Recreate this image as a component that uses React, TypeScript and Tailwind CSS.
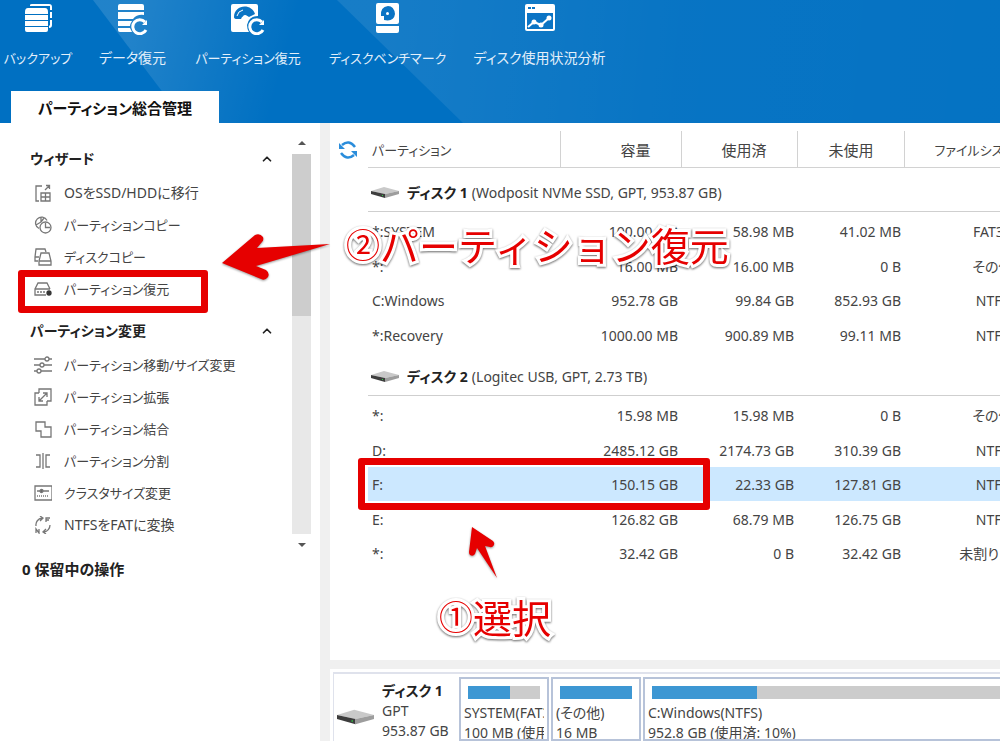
import { ChevronUp } from 'lucide-react';

const toolbar = [
  { label: 'バックアップ', dense: true, icon: <BackupIcon /> },
  { label: 'データ復元', icon: <DataRecoveryIcon /> },
  { label: 'パーティション復元', dense: true, icon: <PartitionRecoveryIcon /> },
  { label: 'ディスクベンチマーク', dense: true, icon: <BenchmarkIcon /> },
  { label: 'ディスク使用状況分析', icon: <UsageIcon /> },
];

// dense: long katakana labels use the smaller text size
const sections = [
  {
    title: 'ウィザード',
    items: [
      {
        label: 'OSをSSD/HDDに移行',
        icon: (
          <>
            <path d="M8 2H2v15h3" />
            <path d="M7 9h9v8H7zM7 13h9M11.500 9v8M11 6l4-4M12 1.500h3.500V5" />
          </>
        ),
      },
      {
        label: 'パーティションコピー',
        dense: true,
        icon: (
          <>
            <path d="M5 12.500A6 6 0 1 1 13 4.500M7 1v5L2 9M7 6l3-4" />
            <circle cx="11.500" cy="11.500" r="5.500" />
            <path d="M11.500 7v4.500H16" />
          </>
        ),
      },
      {
        label: 'ディスクコピー',
        dense: true,
        icon: (
          <>
            <path d="M4 13H1V9l1-8h9l1 3M1 9h4" />
            <path d="M7 5h8l2 8v4H5v-4zM5 13h12" />
          </>
        ),
      },
      {
        label: 'パーティション復元',
        dense: true,
        icon: (
          <>
            <path d="M12 15H1V9l3-6h9l3 6M1 9h15" />
            <path d="M3 12h8" strokeDasharray="2 1" />
            <circle cx="15" cy="13" r="2" fill="#333" stroke="#333" />
          </>
        ),
      },
    ],
  },
  {
    title: 'パーティション変更',
    items: [
      {
        label: 'パーティション移動/サイズ変更',
        dense: true,
        icon: (
          <>
            <path d="M0 3h11M15 3h3M0 9h6M10 9h8M0 15h3M7 15h11" />
            <circle cx="13" cy="3" r="2" />
            <circle cx="8" cy="9" r="2" />
            <circle cx="5" cy="15" r="2" />
          </>
        ),
      },
      {
        label: 'パーティション拡張',
        dense: true,
        icon: (
          <>
            <path d="M5 5V1h12v12h-4M5 5H1v12h12v-4" />
            <path d="M5 13l8-8M9 5h4v4M5 9v4h4" />
          </>
        ),
      },
      { label: 'パーティション結合', dense: true, icon: <path d="M2 2h9v5h6v10H7v-6H2z" /> },
      {
        label: 'パーティション分割',
        dense: true,
        icon: <path d="M2 3h4v12H2M9 1v16M16 3h-4v12h4" />,
      },
      {
        label: 'クラスタサイズ変更',
        dense: true,
        icon: (
          <>
            <path d="M1 2h17v14H1zM3 7h3M9 7h6" />
            <circle cx="7.500" cy="7" r="1.500" fill="#666" />
            <path d="M3 12h12" strokeDasharray="1 1" />
          </>
        ),
      },
      {
        label: 'NTFSをFATに変換',
        icon: (
          <>
            <path d="M2 10a7 7 0 0 1 6-8M6 0l3 2-3 3M16 9a7 7 0 0 1-6 7M12 13l-3 3 3 2" />
            <path d="M12 6V2h4M12 4h3M2 17v-4l3 4v-4" />
          </>
        ),
      },
    ],
  },
];

const disks = [
  {
    name: 'ディスク 1',
    info: '(Wodposit NVMe SSD, GPT, 953.87 GB)',
    rows: [
      ['*:SYSTEM', '100.00 MB', '58.98 MB', '41.02 MB', 'FAT32'],
      ['*:', '16.00 MB', '16.00 MB', '0 B', 'その他'],
      ['C:Windows', '952.78 GB', '99.84 GB', '852.93 GB', 'NTFS'],
      ['*:Recovery', '1000.00 MB', '900.89 MB', '99.11 MB', 'NTFS'],
    ],
  },
  {
    name: 'ディスク 2',
    info: '(Logitec USB, GPT, 2.73 TB)',
    rows: [
      ['*:', '15.98 MB', '15.98 MB', '0 B', 'その他'],
      ['D:', '2485.12 GB', '2174.73 GB', '310.39 GB', 'NTFS'],
      ['F:', '150.15 GB', '22.33 GB', '127.81 GB', 'NTFS'],
      ['E:', '126.82 GB', '68.79 MB', '126.75 GB', 'NTFS'],
      ['*:', '32.42 GB', '0 B', '32.42 GB', '未割り当て'],
    ],
  },
];

function BackupIcon() {
  return (
    <svg width="32" height="32" viewBox="0 0 32 32" fill="#fff">
      <path d="M8 2q0-1 2-1h17q3 0 3 3v3h-2V3H8zM28 9h2v6h-2zM28 17h2v5h-2zM28 22h2q0 3-3 3v-2z" />
      <path d="M6 5h17q3 0 3 4v2H3V9q0-4 3-4zM3 12h23v5H3zM3 18h23v5H3zM3 24h23v3q0 2-2 2H5q-2 0-2-2z" />
    </svg>
  );
}

function DataRecoveryIcon() {
  return (
    <svg width="32" height="32" viewBox="0 0 32 32" fill="#fff">
      <path d="M3 1h22q2 0 2 2v4H1V3q0-2 2-2zM1 9h26v3q-7-1-11 4H1zM1 18h14q-2 3-2 5H1zM1 25h12l2 4H3q-2 0-2-2z" />
      <path d="M28 19a7 7 0 1 0 1 8" fill="none" stroke="#fff" strokeWidth="3" />
      <path d="M30 17v5h-5z" />
    </svg>
  );
}

function PartitionRecoveryIcon() {
  return (
    <svg width="36" height="32" viewBox="0 0 36 32" fill="#fff">
      <path d="M3 1h23q2 0 2 2v10q-9 0-11 9 0 4 2 7H3q-2 0-2-2V3q0-2 2-2z" />
      <path d="M4 14C4 1 22 0 25 11l-6 3q-3-3-7 0l-1 2H7q-3 0-3-2z" fill="#0b74c4" />
      <path d="M7 13Q8 8 13 7" stroke="#fff" fill="none" />
      <circle cx="15" cy="14" r="2" />
      <path d="M32 19a7 7 0 1 0 1 8" fill="none" stroke="#fff" strokeWidth="3" />
      <path d="M34 17v5h-5z" />
    </svg>
  );
}

function BenchmarkIcon() {
  return (
    <svg width="32" height="32" viewBox="0 0 32 32" fill="#fff">
      <path d="M6 0h19q2 0 2 2v17q0 2-2 2H6q-2 0-2-2V2q0-2 2-2zM4 23h23v5q0 2-2 2H6q-2 0-2-2z" />
      <path d="M9 13h3v4q10 2 11-6-1-8-7-8-8 1-7 10z" fill="#0b74c4" />
      <circle cx="15.500" cy="10.500" r="1.500" />
    </svg>
  );
}

function UsageIcon() {
  return (
    <svg width="32" height="32" viewBox="0 0 32 32">
      <rect x="1" y="1" width="30" height="27" rx="2" fill="#fff" />
      <path d="M3 10h26v16H3zM4 4h3v2H4zM8 4h3v2H8z" fill="#0b74c4" />
      <path d="M4 24l6-5 7 3 8-7" fill="none" stroke="#fff" strokeWidth="2" />
      <circle cx="10" cy="19" r="2.500" fill="#fff" />
      <circle cx="17" cy="22" r="2.500" fill="#fff" />
      <circle cx="25" cy="15" r="2.500" fill="#fff" />
    </svg>
  );
}

function DriveIcon({ className }: { className: string }) {
  return (
    <svg className={className} viewBox="0 0 28 11">
      <path d="M0 4L13 0l15 4-14 3z" fill="#c9c9c9" />
      <path d="M0 4l14 3v4L0 7z" fill="#3d3d3d" />
      <path d="M14 7l14-3v3l-14 4z" fill="#9d9d9d" />
      <path d="M11 8h1v1h-1z" fill="#2fd045" />
    </svg>
  );
}

function RefreshIcon() {
  return (
    <svg width="20" height="20" viewBox="0 0 20 20" fill="none" stroke="#2b8ddb" strokeWidth="2">
      <path d="M4 5Q11-1 17 7M16 15q-7 6-13-2" strokeWidth="2.500" />
      <path d="M1 3v6h6zM19 17v-6h-6z" fill="#2b8ddb" stroke="none" />
    </svg>
  );
}

// faint diagonal light bands behind the toolbar
function HeaderBands() {
  return (
    <svg className="absolute inset-0 h-full w-full" viewBox="0 0 1000 123" preserveAspectRatio="none">
      <defs>
        <linearGradient id="band1" gradientUnits="userSpaceOnUse" x1="130" y1="40" x2="280" y2="80">
          <stop offset="0" stopColor="#fff" stopOpacity="0.130" />
          <stop offset="1" stopColor="#fff" stopOpacity="0" />
        </linearGradient>
        <linearGradient id="band2" gradientUnits="userSpaceOnUse" x1="370" y1="0" x2="1000" y2="60">
          <stop offset="0" stopColor="#fff" stopOpacity="0.090" />
          <stop offset="0.500" stopColor="#fff" stopOpacity="0.030" />
          <stop offset="1" stopColor="#fff" stopOpacity="0.020" />
        </linearGradient>
      </defs>
      <path d="M93 0h244l126 123H186z" fill="url(#band1)" />
      <path d="M337 0h663v123H463z" fill="url(#band2)" />
    </svg>
  );
}

function Partition({
  title,
  detail,
  used,
  className,
}: {
  title: string;
  detail: string;
  used: number;
  className: string;
}) {
  return (
    <div className={`overflow-hidden whitespace-nowrap border-2 border-[#b7c3d9] pt-[7px] ${className}`}>
      <div className="mx-[7px] h-[13px] bg-[#cccccc]">
        <div className="h-full bg-[#3d97d3]" style={{ width: `${used}%` }} />
      </div>
      <div className="mx-[3px] mt-1 overflow-hidden leading-5">
        <p>{title}</p>
        <p>{detail}</p>
      </div>
    </div>
  );
}

function Note({ step, text, className }: { step: string; text: string; className: string }) {
  return (
    <p
      className={`absolute flex items-center whitespace-nowrap text-[39px] leading-[48px] text-[#e60000] [paint-order:stroke] [-webkit-text-stroke:6px_white] drop-shadow-[0_1px_1px_rgba(0,0,0,0.6)] [font-feature-settings:normal] font-['Noto_Sans_CJK_JP',sans-serif] ${className}`}
    >
      <span className="text-[34px]">{step}</span>
      <span>{text}</span>
    </p>
  );
}

export default function App() {
  return (
    <div className="relative flex h-screen flex-col overflow-hidden bg-white text-sm text-[#444] font-['Noto_Sans','Noto_Sans_CJK_JP',sans-serif] [font-feature-settings:'palt']">
      <header className="relative shrink-0 bg-[#0070c2]">
        <HeaderBands />
        <nav className="relative grid grid-cols-[66px_67px_108px_115px_133px] gap-7 pl-[5px] pt-[3px] text-[#e3effa]">
          {toolbar.map((tool) => (
            <button key={tool.label} className="flex flex-col items-center gap-[11px] whitespace-nowrap">
              {tool.icon}
              <span className={`leading-6 ${tool.dense ? 'text-[13px]' : ''}`}>{tool.label}</span>
            </button>
          ))}
        </nav>
        <div className="relative mt-[21px] flex pl-[11px]">
          <button className="h-8 w-[208px] whitespace-nowrap bg-white pt-1 text-[15px] font-bold text-[#111]">
            パーティション総合管理
          </button>
        </div>
      </header>

      <div className="flex min-h-0 flex-1">
        <aside className="w-80 shrink-0">
          <div className="flex pt-3">
            <div className="min-w-0 flex-1 pb-1 pt-1.5">
              {sections.map((section) => (
                <section key={section.title} className="mb-2">
                  <button className="flex h-9 w-full items-center justify-between pl-[30px] pr-[18px] font-bold text-[#222]">
                    {section.title}
                    <ChevronUp size={14} strokeWidth={3} />
                  </button>
                  <ul>
                    {section.items.map((item) => (
                      <li key={item.label}>
                        <button
                          className={`flex h-8 w-full items-center gap-3 whitespace-nowrap pl-[34px] ${item.dense ? 'text-[13px]' : ''}`}
                        >
                          <svg
                            width="18"
                            height="18"
                            viewBox="0 0 18 18"
                            fill="none"
                            stroke="#777"
                            strokeWidth="1.300"
                          >
                            {item.icon}
                          </svg>
                          {item.label}
                        </button>
                      </li>
                    ))}
                  </ul>
                </section>
              ))}
            </div>
            {/* Scrollbar */}
            <div className="mr-[9px] flex w-[19px] flex-col items-center">
              <svg className="mb-[7px] mt-1 h-2 w-2" viewBox="0 0 8 8" fill="#555">
                <path d="M4 2l4 4H0z" />
              </svg>
              <div className="w-full flex-1 bg-[#e8e8e8]">
                <div className="h-[162px] bg-[#cdcdcd]" />
              </div>
              <svg className="mb-1 mt-[7px] h-2 w-2" viewBox="0 0 8 8" fill="#555">
                <path d="M0 2h8L4 6z" />
              </svg>
            </div>
          </div>
          <p className="pl-[22px] pt-1.5 text-[15px] font-bold text-[#222]">0 保留中の操作</p>
        </aside>

        <div className="w-2.5 shrink-0 bg-[#f0f0f0]" />

        <main className="flex min-w-0 flex-1 flex-col">
          <div className="flex min-h-0 flex-1 overflow-hidden">
            <button aria-label="更新" className="mt-[17px] h-5 w-[38px] shrink-0 pl-2">
              <RefreshIcon />
            </button>
            <div className="min-w-0 flex-1 overflow-hidden pt-2">
              <table className="w-full min-w-[713px] table-fixed">
                <colgroup>
                  <col />
                  <col className="w-[121px]" />
                  <col className="w-[116px]" />
                  <col className="w-[107px]" />
                  <col className="w-[177px]" />
                </colgroup>
                <thead>
                  <tr className="h-9 border-b border-[#d2d2d2] text-right [&>th]:pt-1 [&>th]:font-normal">
                    <th className="border-r border-[#d2d2d2] pl-1 text-left text-[13px]">パーティション</th>
                    <th className="border-r border-[#d2d2d2] pr-[30px] text-[15px]">容量</th>
                    <th className="border-r border-[#d2d2d2] pr-[30px] text-[15px]">使用済</th>
                    <th className="border-r border-[#d2d2d2] pr-[30px] text-[15px]">未使用</th>
                    <th className="pl-[30px] text-left text-[13px]">ファイルシステム</th>
                  </tr>
                </thead>
                {disks.map((disk) => (
                  <tbody key={disk.name}>
                    <tr>
                      <th colSpan={5} className="pb-0.5 pt-[7px] text-left font-normal">
                        <div className="flex h-[37px] items-center border-b border-[#cfcfcf] pl-[3px]">
                          <DriveIcon className="h-[11px] w-7" />
                          <span className="ml-2 font-bold text-[#222]">{disk.name}</span>
                          <span className="ml-1">{disk.info}</span>
                        </div>
                      </th>
                    </tr>
                    {disk.rows.map((row, i) => (
                      <tr
                        key={i}
                        className={`even:h-[34px] odd:h-[35px] [&>td]:pt-[3px] ${row[0] === 'F:' ? 'bg-[#cce8ff]' : ''}`}
                      >
                        <td className="pl-1">{row[0]}</td>
                        <td className="pr-[3px] text-right">{row[1]}</td>
                        <td className="pr-[3px] text-right">{row[2]}</td>
                        <td className="pr-[3px] text-right">{row[3]}</td>
                        <td className="text-center">{row[4]}</td>
                      </tr>
                    ))}
                  </tbody>
                ))}
              </table>
            </div>
          </div>

          <div className="h-[9px] shrink-0 bg-[#f0f0f0]" />

          <div className="ml-[3px] mt-[3px] flex h-[69px] shrink-0 gap-0.5 overflow-hidden border-l border-t-2 border-[#dfe2ec] pt-[3px]">
            <div className="flex w-[123px] shrink-0 gap-2 whitespace-nowrap pl-[3px] pt-1">
              <DriveIcon className="mt-7 h-4 w-[37px]" />
              <div className="leading-5">
                <p className="font-bold text-[#222]">ディスク 1</p>
                <p>GPT</p>
                <p>953.87 GB</p>
              </div>
            </div>
            <Partition className="w-[90px] shrink-0" title="SYSTEM(FAT32)" detail="100 MB (使用済: 58%)" used={59} />
            <Partition className="w-[90px] shrink-0" title="(その他)" detail="16 MB" used={100} />
            <Partition className="w-[1067px] shrink-0" title="C:Windows(NTFS)" detail="952.8 GB (使用済: 10%)" used={10} />
          </div>
        </main>
      </div>

      {/* Callouts drawn over the window */}
      <div className="absolute left-[18px] top-[270px] h-[43px] w-[190px] rounded-[3px] border-7 border-[#e60000]" />
      <div className="absolute left-[358px] top-[458px] h-[52px] w-[352px] rounded-[3px] border-7 border-[#e60000]" />
      <svg
        className="absolute left-[220px] top-[230px] h-[52px] w-[112px] drop-shadow-[0_1px_1px_rgba(0,0,0,0.4)]"
        viewBox="220 230 112 52"
        fill="#e60000"
      >
        <path d="M222 263L255 235q5-2 8 2 1 3-1 5l-5 6 73-4-74 22 10 4q4 3 2 7-3 4-7 2z" />
      </svg>
      <svg
        className="absolute left-[466px] top-[524px] h-[58px] w-[32px] drop-shadow-[0_1px_1px_rgba(0,0,0,0.4)]"
        viewBox="466 524 32 58"
        fill="#e60000"
      >
        <path d="M472 527l21 14q2 2 1 4-2 3-4 2l-5-1 12 32-20-30-2 6q-2 3-5 1-1-1-1-3z" />
      </svg>
      <Note className="left-[346px] top-[220px]" step="②" text="パーティション復元" />
      <Note className="left-[439px] top-[592px]" step="①" text="選択" />
    </div>
  );
}
